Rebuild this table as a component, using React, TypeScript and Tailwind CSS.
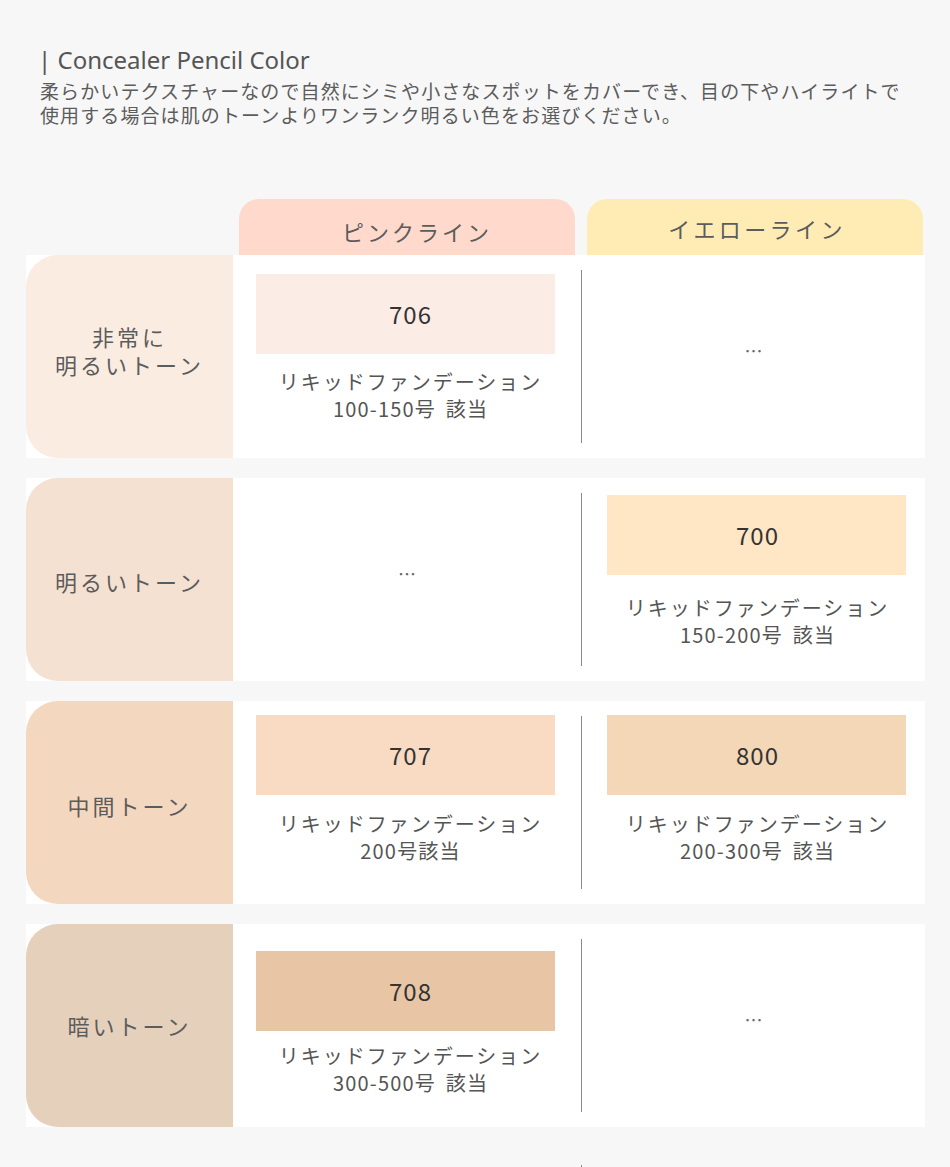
import React from 'react';

type Cell = {
  code: string;
  swatch: string;
  range: string;
} | null;

type Row = {
  label: string[];
  labelBg: string;
  labelPad: string;
  pad: string;
  textGap: string;
  pink: Cell;
  yellow: Cell;
};

const rows: Row[] = [
  {
    label: ['非常に', '明るいトーン'],
    labelBg: 'bg-[#fbece2]',
    labelPad: 'pb-[14px]',
    pad: 'pt-[19px]',
    textGap: 'mt-[14px]',
    pink: { code: '706', swatch: 'bg-[#fcece6]', range: '100-150号 該当' },
    yellow: null,
  },
  {
    label: ['明るいトーン'],
    labelBg: 'bg-[#f5e1d2]',
    labelPad: 'pt-[2px]',
    pad: 'pt-[17px]',
    textGap: 'mt-[19px]',
    pink: null,
    yellow: { code: '700', swatch: 'bg-[#ffe6c5]', range: '150-200号 該当' },
  },
  {
    label: ['中間トーン'],
    labelBg: 'bg-[#f4d7bf]',
    labelPad: 'pt-[4px]',
    pad: 'pt-[14px]',
    textGap: 'mt-[15px]',
    pink: { code: '707', swatch: 'bg-[#f9dbc3]', range: '200号該当' },
    yellow: { code: '800', swatch: 'bg-[#f4d7b7]', range: '200-300号 該当' },
  },
  {
    label: ['暗いトーン'],
    labelBg: 'bg-[#e5d0bc]',
    labelPad: 'pb-[2px]',
    pad: 'pt-[27px]',
    textGap: 'mt-[11px]',
    pink: { code: '708', swatch: 'bg-[#e8c5a5]', range: '300-500号 該当' },
    yellow: null,
  },
];

const jp = "font-['Noto_Sans_CJK_JP','Noto_Sans',sans-serif]";

const Shade: React.FC<{
  cell: Cell;
  pad: string;
  gap: string;
  left: string;
  nudge: string;
}> = ({ cell, pad, gap, left, nudge }) => {
  if (!cell) {
    return (
      <div className="flex items-center justify-center pb-[12px]">
        <span className="text-[18px] text-[#666]">…</span>
      </div>
    );
  }
  return (
    <div className={`${pad} ${left}`}>
      <div className="flex w-[299px] flex-col items-center">
        <div
          className={`flex h-[80px] w-full items-center justify-center ${cell.swatch} ${nudge} text-[24px] tracking-[1px] text-[#333]`}
        >
          {cell.code}
        </div>
        <div
          className={`${gap} ${nudge} text-center text-[20px] leading-[27px] tracking-[2px] text-[#555]`}
        >
          <div>リキッドファンデーション</div>
          <div className="tracking-[1.2px] [word-spacing:4px]">{cell.range}</div>
        </div>
      </div>
    </div>
  );
};

export default function App() {
  return (
    <div className={`min-h-screen bg-[#f7f7f7] pl-[26px] pt-[44px] ${jp}`}>
      <div className="pl-[12px]">
        <h1 className="text-[24px] leading-[32px] font-normal text-[#555] font-['Noto_Sans','Noto_Sans_CJK_JP',sans-serif]">
          | Concealer Pencil Color
        </h1>
        <p className="mt-[3px] pl-[2px] text-[19px] leading-[24px] tracking-[1.1px] text-[#5c5c5c]">
          柔らかいテクスチャーなので自然にシミや小さなスポットをカバーでき、目の下やハイライトで
          <br />
          使用する場合は肌のトーンよりワンランク明るい色をお選びください。
        </p>
      </div>

      <div className="mt-[72px] flex gap-[12px] pl-[213px]">
        <div className="flex h-[56px] w-[336px] items-center justify-center rounded-t-[20px] bg-[#ffd9cb] pl-[20px] pt-[8px] text-[22px] tracking-[3px] text-[#5c5c5c]">
          ピンクライン
        </div>
        <div className="flex h-[56px] w-[336px] items-center justify-center rounded-t-[20px] bg-[#ffecb5] pl-[4px] pt-[2px] text-[22px] tracking-[3.4px] text-[#5c5c5c]">
          イエローライン
        </div>
      </div>

      <div className="flex flex-col gap-[20px]">
        {rows.map((row, i) => (
          <div
            key={i}
            className="grid h-[203px] w-[899px] grid-cols-[207px_348px_1px_343px] bg-white"
          >
            <div
              className={`flex flex-col items-center justify-center rounded-l-[32px] ${row.labelBg} ${row.labelPad} text-[22px] leading-[28px] tracking-[3px] text-[#5c5c5c]`}
            >
              {row.label.map((l) => (
                <div key={l}>{l}</div>
              ))}
            </div>
            <Shade
              cell={row.pink}
              pad={row.pad}
              gap={row.textGap}
              left="pl-[23px]"
              nudge="pl-[10px]"
            />
            <div className="my-[15px] bg-[#8a8a8a]" />
            <Shade
              cell={row.yellow}
              pad={row.pad}
              gap={row.textGap}
              left="pl-[25px]"
              nudge="pl-[2px]"
            />
          </div>
        ))}
      </div>

      <div className="grid grid-cols-[207px_348px_1px_343px] pt-[38px]">
        <div />
        <div />
        <div className="h-[2px] bg-[#8a8a8a]" />
        <div />
      </div>
    </div>
  );
}
